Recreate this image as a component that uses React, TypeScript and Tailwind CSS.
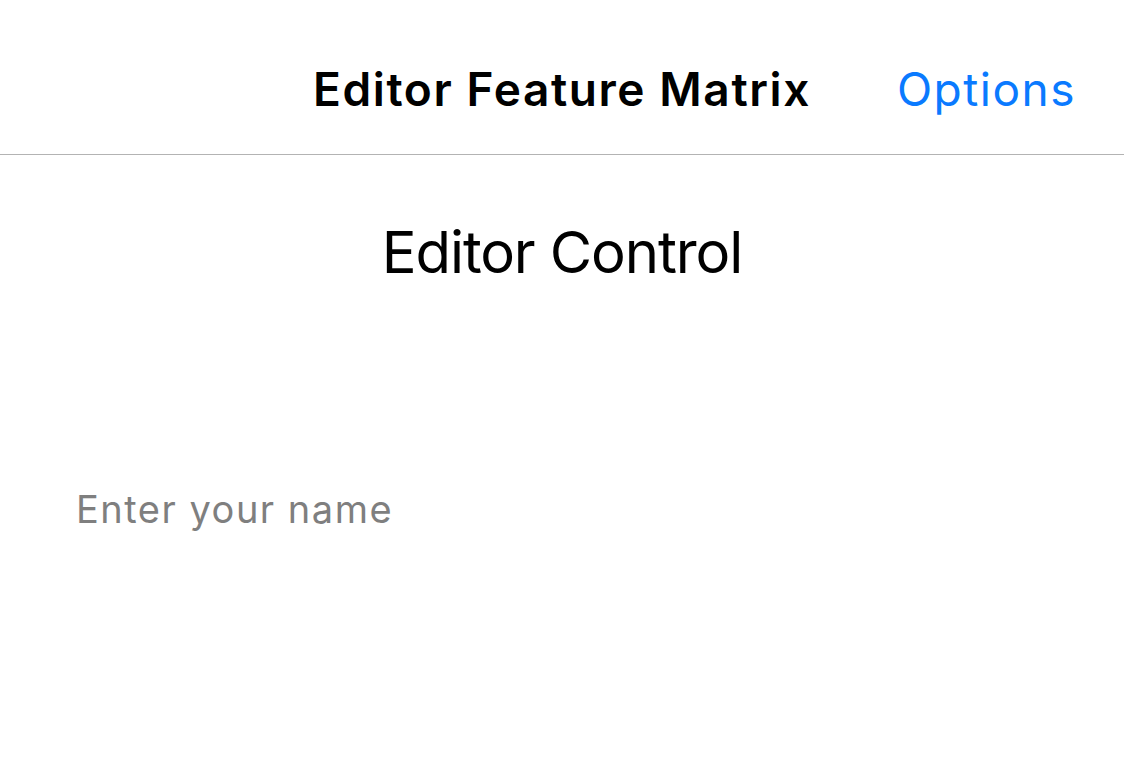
export default function App() {
  return (
    <div className="flex h-[776px] w-[1124px] flex-col bg-white font-['Inter','Noto_Sans',sans-serif]">
      <header className="relative flex h-[155px] items-end border-b border-[#b3b3b3] pb-[37px]">
        <h1 className="w-full text-center text-[46px] font-semibold leading-[56px] tracking-[1.6px] text-black">Editor Feature Matrix</h1>
        <button className="absolute right-[48px] bottom-[37px] text-[46px] leading-[56px] tracking-[1.5px] text-[#0a7aff]">Options</button>
      </header>
      <main className="flex flex-1 flex-col">
        <h2 className="mt-[62px] text-center text-[58px] leading-[70px] tracking-[-1.1px] text-black">Editor Control</h2>
        <input
          placeholder="Enter your name"
          className="mt-[197px] ml-[76px] w-[900px] bg-transparent text-[38px] leading-[50px] tracking-[1.5px] text-black outline-none placeholder:text-[#7f7f7f]"
        />
      </main>
    </div>
  );
}
